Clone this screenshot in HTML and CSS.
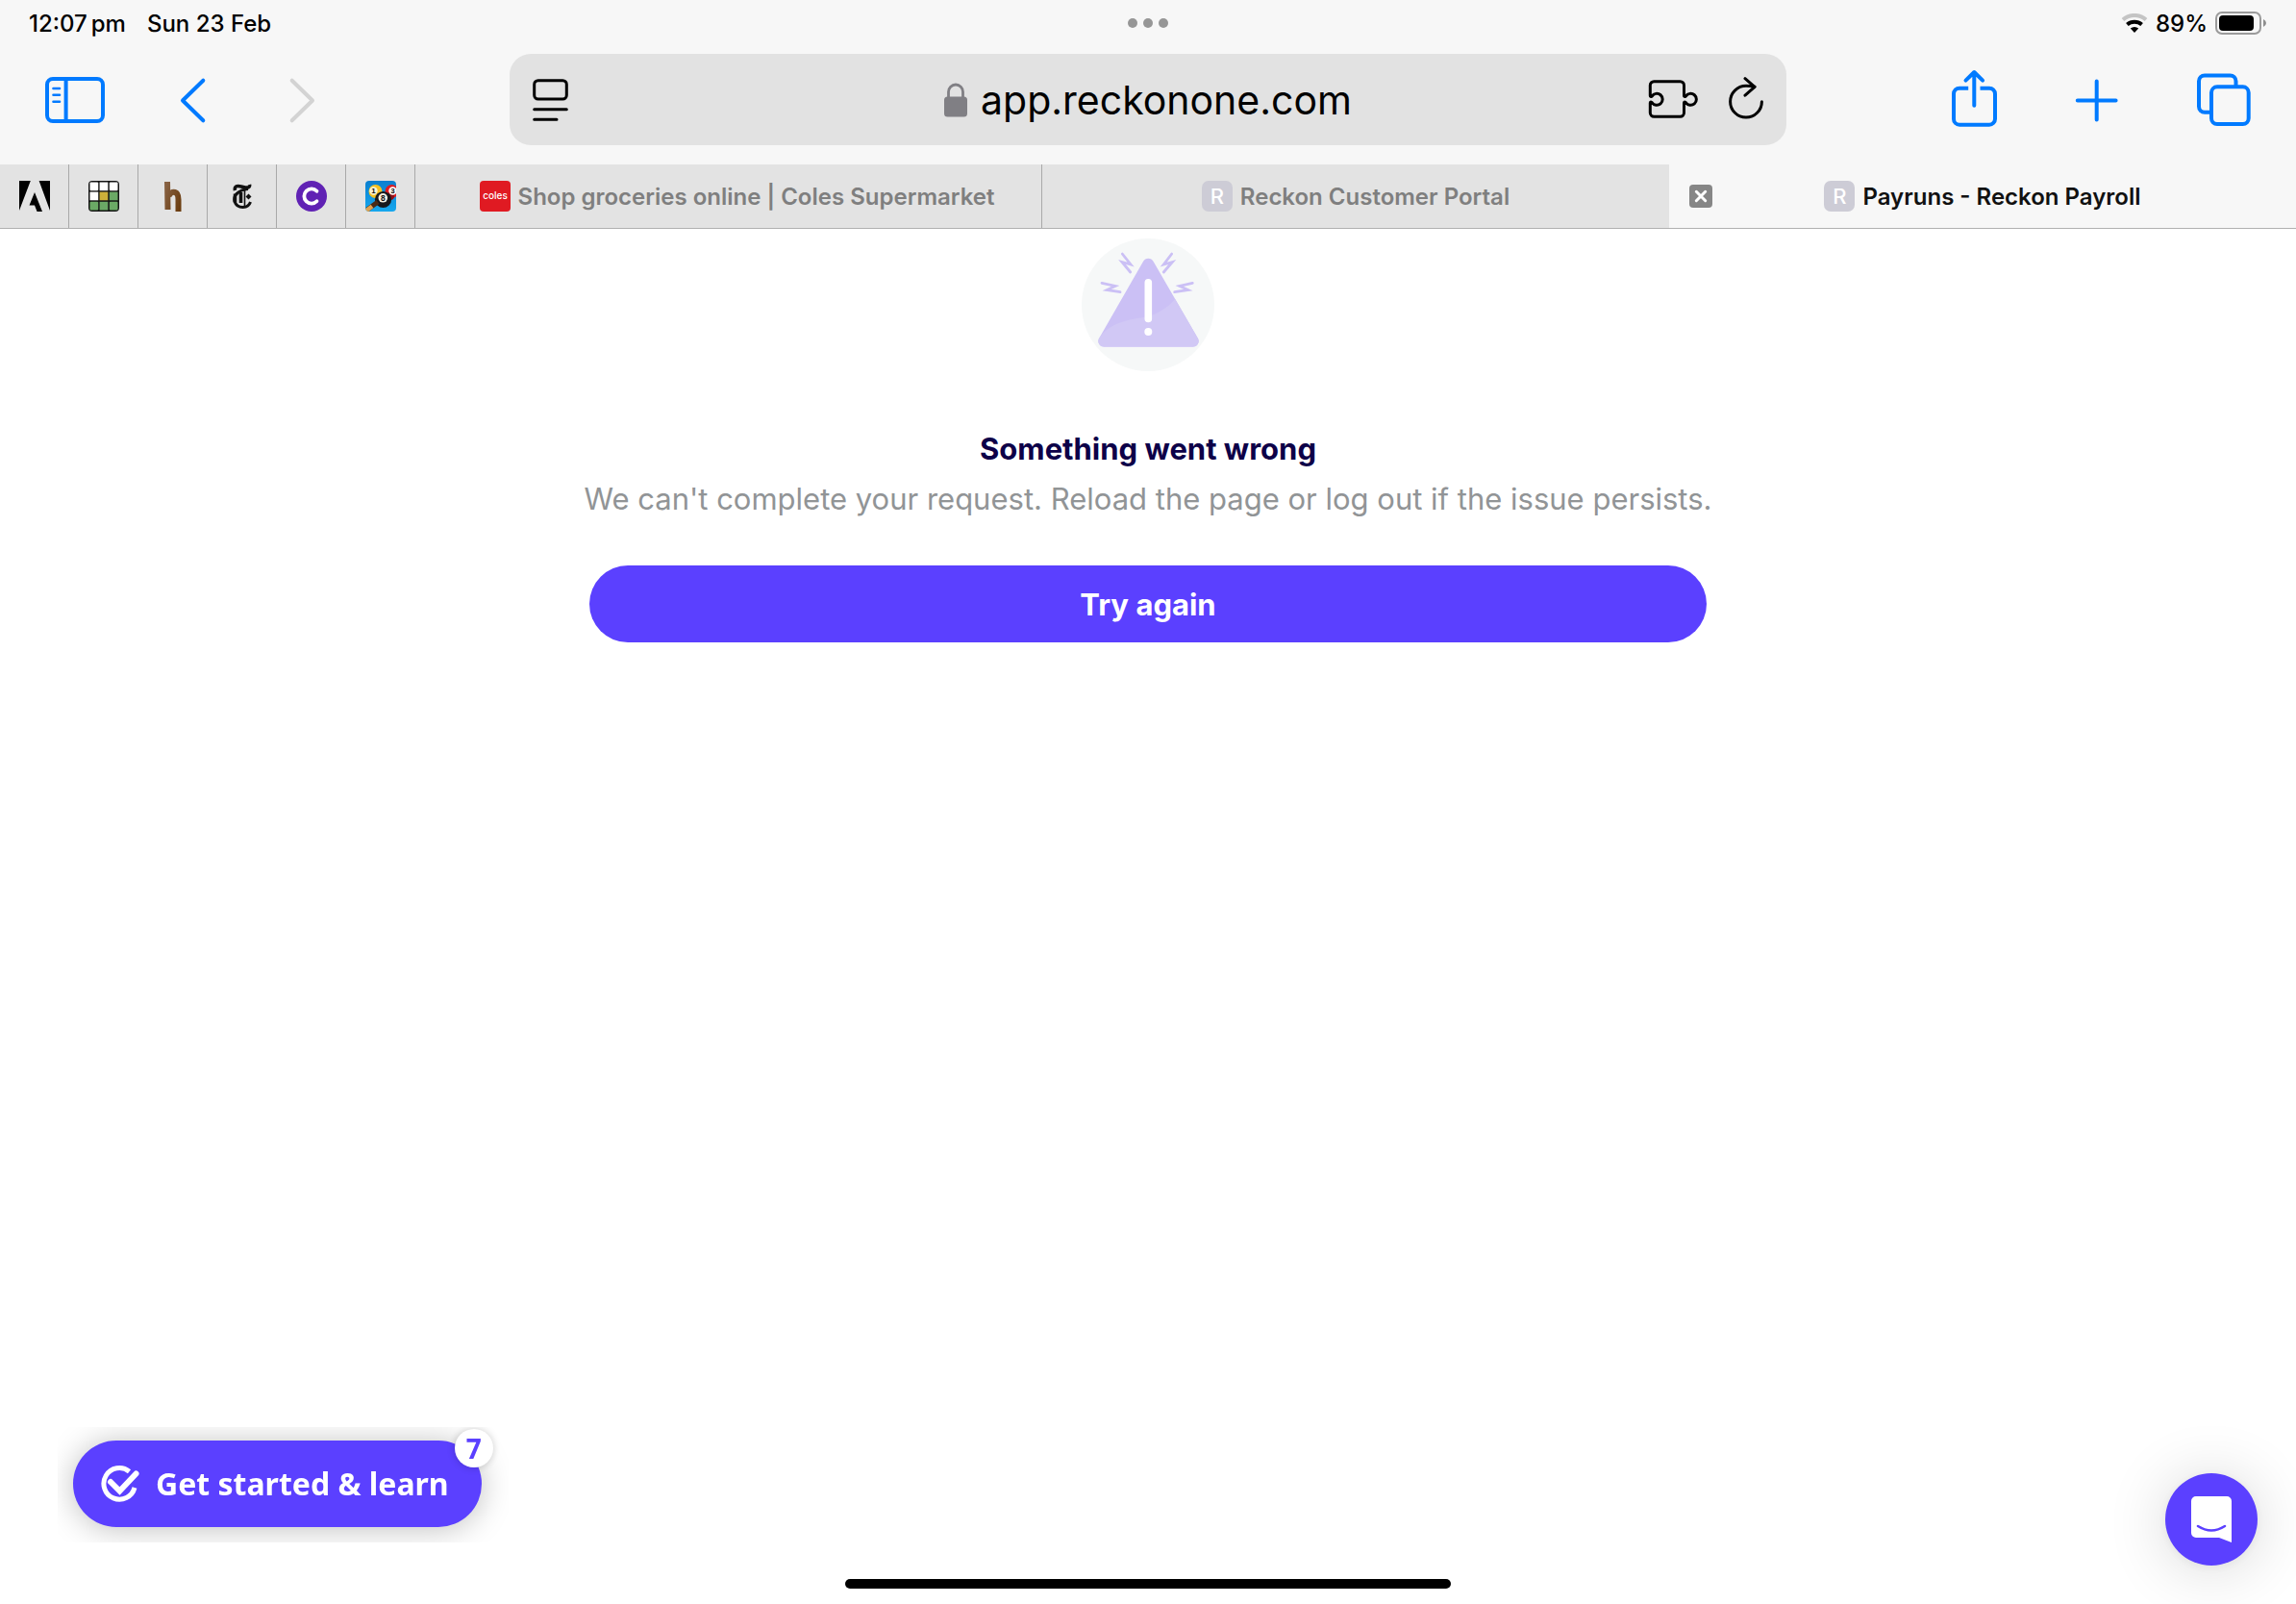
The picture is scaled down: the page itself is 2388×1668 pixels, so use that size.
FILE: index.html
```html
<!DOCTYPE html>
<html lang="en-AU">
<head>
<meta charset="utf-8">
<meta name="viewport" content="width=device-width, initial-scale=1">
<title>Payruns - Reckon Payroll</title>
<link rel="stylesheet" href="styles.css">
</head>
<body>
<header class="browser">
  <div class="status">
    <div class="status-left"><span class="time">12:07<span class="meridiem">pm</span></span><span>Sun 23 Feb</span></div>
    <button class="multitask" aria-label="Multitasking"><i></i><i></i><i></i></button>
    <div class="status-right">
      <svg width="28" height="20" viewBox="0 0 28 20" fill="none" aria-label="Wi-Fi">
        <path d="M2 6.5a18 18 0 0 1 24 0" stroke="#c4c4c4" stroke-width="4"/>
        <path d="M6.4 11.6a11.6 11.6 0 0 1 15.200 0" stroke="#000" stroke-width="4"/>
        <path d="M14 20l-4.200-4.400a6.200 6.200 0 0 1 8.400 0z" fill="#000"/>
      </svg>
      <span class="percent">89%</span>
      <svg width="54" height="24" viewBox="0 0 54 24" aria-label="Battery">
        <rect x="1" y="1" width="46" height="22" rx="6" fill="none" stroke="#9b9b9b" stroke-width="2"/>
        <rect x="4" y="4" width="36" height="16" rx="4"/>
        <path d="M50 8q3 1.500 3 4t-3 4z" fill="#8e8e8e"/>
      </svg>
    </div>
  </div>

  <div class="toolbar">
    <div class="tools tools-left">
      <button class="tool" aria-label="Show sidebar"><svg viewBox="0 0 64 64"><rect x="3" y="10" width="58" height="44" rx="6"/><path d="M22.600 10v44"/><path d="M9.500 20h6.500M9.500 26.700h6.500M9.500 33.700h6.500" stroke-width="2.600"/></svg></button>
      <button class="tool" aria-label="Back"><svg viewBox="0 0 64 64"><path d="M45.300 11.700L24 32.500l21.300 20.800"/></svg></button>
      <button class="tool tool-off" aria-label="Forward" disabled><svg viewBox="0 0 64 64"><path d="M17.700 11.700L39 32.500 17.700 53.300"/></svg></button>
    </div>
    <div class="address">
      <button class="mini" aria-label="Page menu"><svg width="40" height="48" viewBox="0 0 40 48"><rect x="3.700" y="3.700" width="33.600" height="19.300" rx="4"/><path d="M3.700 33.700h33.600M3.700 44.300h23.300"/></svg></button>
      <label class="url">
        <svg width="24" height="36" viewBox="0 0 24 36" aria-label="Secure"><path d="M4.500 16V9.500a7.500 7.500 0 0 1 15 0V16" fill="none" stroke="#807f84" stroke-width="2.800"/><rect y="14.500" width="24" height="21" rx="3.500" fill="#807f84"/></svg>
        <input class="url-input" type="text" value="app.reckonone.com" size="17" aria-label="Address">
      </label>
      <div class="address-end">
        <button class="mini" aria-label="Extensions"><svg width="52" height="48" viewBox="0 0 52 48"><path d="M6.300 4.700h27.200a4 4 0 0 1 4 4v10.800q0 1.600 1.800.600a6 6 0 1 1 0 6.400q-1.800-1-1.800.600v10.200a4 4 0 0 1-4 4H6.300a4 4 0 0 1-4-4V27.100q0-1.600 1.800-.600a6 6 0 1 0 0-6.400q-1.800 1-1.800-.600V8.700a4 4 0 0 1 4-4z"/></svg></button>
        <button class="mini" aria-label="Reload"><svg width="40" height="48" viewBox="0 0 40 48"><path d="M36.400 25.700A16.400 16.400 0 1 1 20 9.300q5 0 9 .9"/><path d="M19 1.700l10 8.600-10 8.900"/></svg></button>
      </div>
    </div>
    <div class="tools tools-right">
      <button class="tool" aria-label="Share"><svg viewBox="0 0 64 64"><path stroke-linecap="butt" d="M22.200 19.700H13a6 6 0 0 0-6 6v26a6 6 0 0 0 6 6h31a6 6 0 0 0 6-6v-26a6 6 0 0 0-6-6h-9.500"/><path d="M28.300 3.500v34.300M19.500 11.700l8.800-8.700 8.800 8.700"/></svg></button>
      <button class="tool" aria-label="New tab"><svg viewBox="0 0 64 64"><path d="M7.800 32.500h39.800M27.700 12.600v39.800"/></svg></button>
      <button class="tool" aria-label="Show all tabs"><svg viewBox="0 0 64 64"><path stroke-linecap="butt" d="M44.500 18v-5.500a6 6 0 0 0-6-6H12a6 6 0 0 0-6 6v26.300a6 6 0 0 0 6 6h7"/><rect x="19" y="18.300" width="38.700" height="38.700" rx="6"/></svg></button>
    </div>
  </div>

  <nav class="tabs" aria-label="Open tabs">
    <a class="pin" href="#" aria-label="Adobe"><svg class="fav" viewBox="0 0 32 32"><path d="M0 0h11.800L0 31zM20.600 0H32v31zM16 12l8 20h-5.500l-2.500-6.500h-5.500z"/></svg></a>
    <a class="pin" href="#" aria-label="Word puzzle"><svg class="fav" viewBox="0 0 32 32"><rect width="32" height="32" rx="4" fill="#141414"/><g fill="#fff"><rect x="1.500" y="1.500" width="8.700" height="8.700" rx="1"/><rect x="11.600" y="1.500" width="8.700" height="8.700"/><rect x="21.800" y="1.500" width="8.700" height="8.700" rx="1"/><rect x="1.500" y="11.600" width="8.700" height="8.700"/></g><rect x="11.600" y="11.600" width="8.700" height="8.700" fill="#cdb13a"/><g fill="#6ba965"><rect x="21.800" y="11.600" width="8.700" height="8.700"/><rect x="1.500" y="21.800" width="8.700" height="8.700" rx="1"/><rect x="11.600" y="21.800" width="8.700" height="8.700"/><rect x="21.800" y="21.800" width="8.700" height="8.700" rx="1"/></g></svg></a>
    <a class="pin" href="#" aria-label="Brown favicon"><svg class="fav" viewBox="0 0 32 32"><defs><linearGradient id="wood" x2="1" y2="1"><stop offset="0" stop-color="#876142"/><stop offset="1" stop-color="#6b3d10"/></linearGradient></defs><path d="M10 1L10.500 30M11.500 15.500q3-4.500 6.500-3.500t3.500 7.500V32" fill="none" stroke="url(#wood)" stroke-width="6"/></svg></a>
    <a class="pin" href="#" aria-label="The New York Times"><svg class="fav" viewBox="0 0 32 32" fill="none" stroke="#111"><path d="M8.500 10q-1-4.500 3-4.500c4 0 7 2.500 11 1.200q1.500-.7 1-2.700" stroke-width="3.600"/><path d="M22 8.500q-6 .5-10 3.500-5.500 4-4 9.500 2 6 8.500 6 6 0 8-5.500" stroke-width="3"/><path d="M8.500 13.500v9" stroke-width="3.500"/><path d="M14.500 12v11" stroke-width="3.600"/><path d="M18.500 10v17" stroke-width="1.600"/><path d="M22.500 13.500l3 3-3 3-3-3z" fill="#111" stroke="none"/></svg></a>
    <a class="pin" href="#" aria-label="Purple favicon"><svg class="fav" viewBox="0 0 32 32"><circle cx="16" cy="16" r="16" fill="#6022b4"/><path d="M21.500 10.800a7.600 7.600 0 1 0 0 10.400" fill="none" stroke="#fff" stroke-width="3.800" stroke-linecap="round"/></svg></a>
    <a class="pin" href="#" aria-label="8 Ball Pool"><svg class="fav" viewBox="0 0 32 32"><defs><clipPath id="pool"><rect width="32" height="32" rx="4"/></clipPath><linearGradient id="felt" x2="0" y2="1"><stop offset="0" stop-color="#0a7fd0"/><stop offset="1" stop-color="#17a8ee"/></linearGradient></defs><g clip-path="url(#pool)" font-family="Liberation Sans, sans-serif" font-weight="700" text-anchor="middle" fill="#111"><rect width="32" height="32" fill="url(#felt)"/><circle cx="10.500" cy="11" r="7" fill="#f5c120"/><circle cx="27.500" cy="11" r="7" fill="#dc1c22"/><circle cx="26" cy="16" r="4" fill="#8d1018"/><circle cx="8.500" cy="10.500" r="4.200" fill="#fbf3d5"/><circle cx="28.500" cy="10.500" r="4.200" fill="#fff"/><text x="8.500" y="13.300" font-size="8">1</text><text x="28.500" y="13.300" font-size="8">3</text><circle cx="18.500" cy="19.500" r="8.600" fill="#17181c"/><circle cx="18.300" cy="17.800" r="4.800" fill="#f4f0e2"/><text x="18.300" y="20.900" font-size="8.500">8</text><path d="M2 30L13 22" stroke="#4a2a16" stroke-width="5"/><path d="M1 31l6-4.500" stroke="#e0a352" stroke-width="4.500"/></g></svg></a>
    <a class="tab tab-long" href="#"><span class="tab-label"><svg class="fav" viewBox="0 0 32 32"><rect width="32" height="32" rx="4" fill="#e01a22"/><text x="16" y="19" font-family="Inter, sans-serif" font-weight="500" font-size="10" fill="#fff" text-anchor="middle">coles</text></svg>Shop groceries online | Coles Supermarket</span></a>
    <a class="tab" href="#"><span class="tab-label"><span class="fav letter">R</span>Reckon Customer Portal</span></a>
    <div class="tab tab-active"><button class="close" aria-label="Close tab"><svg width="24" height="24" viewBox="0 0 24 24"><path d="M7.300 7.300l9.400 9.400M16.700 7.300l-9.400 9.400"/></svg></button><a class="tab-label" href="#" aria-current="page"><span class="fav letter">R</span>Payruns - Reckon Payroll</a></div>
  </nav>
</header>

<main class="page">
  <section class="error">
    <svg class="art" width="138" height="138" viewBox="0 0 138 138" aria-hidden="true">
      <defs><clipPath id="tri"><path d="M64.100 23.700L18.300 103.500a6 6 0 0 0 5.200 9.200h92a6 6 0 0 0 5.200-9.200L74.500 23.700a6 6 0 0 0-10.400 0z"/></clipPath></defs>
      <circle cx="69" cy="69" r="69" fill="#f6f8f8"/>
      <g clip-path="url(#tri)"><path fill="#cbc0f5" d="M0 0h138v138H0z"/><path fill="#d1c8f5" d="M20 101C33 86 52 84 64 82s24-8 34-20l30 50H10z"/></g>
      <path d="M69.300 45.700v37.700" stroke="#fff" stroke-width="7.600" stroke-linecap="round"/><circle cx="69.300" cy="97" r="4" fill="#fff"/>
      <path d="M42.300 16l8.700 11-9-2.500L50.700 35M93.700 16l-8.400 11 9-2.500L85.300 35M21 46.300l14 3.200-8.700 4L40 55.700M115.300 46.300l-13.500 3.200 8.900 4-14 2.200" fill="none" stroke="#cbc0f5" stroke-width="2.800" stroke-linecap="round"/>
    </svg>
    <h1 class="error-title">Something went wrong</h1>
    <p class="error-text">We can't complete your request. Reload the page or log out if the issue persists.</p>
    <button class="retry">Try again</button>
  </section>
</main>

<aside class="launcher">
  <button class="learn"><svg width="42" height="40" viewBox="0 0 42 40" fill="none" stroke="#fff"><path d="M30.500 7.200A16.300 16.300 0 1 0 36 24" stroke-width="5"/><path d="M11 18l9.500 9.500L37.500 9.500" stroke-width="6" stroke-linecap="round"/></svg>Get started &amp; learn</button>
  <span class="badge">7</span>
</aside>
<button class="chat" aria-label="Open chat"><svg width="42" height="48" viewBox="0 0 42 48"><path d="M5 0h32a5 5 0 0 1 5 5v43l-13-5H5a5 5 0 0 1-5-5V5a5 5 0 0 1 5-5z" fill="#fff"/><path d="M7 31q14 9 28 0" fill="none" stroke="#5b40ff" stroke-width="2.600" stroke-linecap="round"/></svg></button>
<div class="home"></div>
</body>
</html>
```
FILE: styles.css
```css
* { box-sizing: border-box; }
body { margin: 0; min-height: 100vh; background: #fff; color: #000; font-family: Inter, "Liberation Sans", sans-serif; }
button { padding: 0; border: 0; background: none; color: inherit; font: inherit; cursor: pointer; }
a { color: inherit; text-decoration: none; }
svg { display: block; flex: none; }

.browser { background: #f7f7f7; border-bottom: 1px solid #b0b0b0; }

.status { display: grid; grid-template-columns: 1fr auto 1fr; align-items: center; height: 48px; padding: 0 30px; font-size: 24px; font-weight: 500; }
.status-left { display: flex; gap: 22px; }
.time { display: flex; gap: 4px; }
.multitask { display: flex; gap: 6px; }
.multitask i { width: 10px; height: 10px; border-radius: 50%; background: #969696; }
.status-right { display: flex; justify-content: flex-end; align-items: center; gap: 8px; }

.toolbar { display: grid; grid-template-columns: 1fr minmax(0, 1328px) 1fr; align-items: center; padding: 8px 0 20px; }
.tools { display: flex; }
.tools-left { gap: 56px; padding-left: 46px; }
.tools-right { justify-content: flex-end; gap: 64px; padding-right: 43px; }
.tool { color: #007aff; }
.tool-off { color: #d3d3d3; }
.tool svg { width: 64px; height: 64px; }
.tool svg, .mini svg { fill: none; stroke: currentColor; stroke-width: 4; stroke-linecap: round; stroke-linejoin: round; }
.mini svg { stroke-width: 3; }

.address { display: grid; grid-template-columns: 1fr auto 1fr; align-items: center; height: 95px; padding: 0 22px; border-radius: 22px; background: #e2e2e2; }
.address .mini { justify-self: start; }
.url { display: flex; align-items: center; gap: 14px; }
.url-input { field-sizing: content; padding: 0; border: 0; outline: 0; background: none; color: #000; font: 400 41px/52px Inter, "Liberation Sans", sans-serif; }
.address-end { display: flex; justify-content: flex-end; gap: 30px; }

.tabs { display: grid; grid-template-columns: repeat(6, 72px) repeat(3, minmax(0, 1fr)); height: 66px; background: #e3e3e3; color: #7f7f7f; font-size: 24px; font-weight: 600; }
.pin { display: flex; align-items: center; justify-content: center; border-right: 1px solid #a9a9a9; }
.fav { flex: none; width: 32px; height: 32px; }
.tab { display: grid; grid-template-columns: 1fr auto 1fr; align-items: center; min-width: 0; border-right: 1px solid #a9a9a9; }
.tab-label { display: flex; grid-column: 2; align-items: center; gap: 8px; white-space: nowrap; }
.tab-long { padding-left: 18px; }
.tab:nth-last-child(2) { border-right: 0; }
.tab-active { border-right: 0; background: #f7f7f7; color: #111; }
.letter { display: flex; align-items: center; justify-content: center; border-radius: 7px; background: #cdccd6; color: #fff; font-size: 22px; font-weight: 500; }
.close { justify-self: start; margin-left: 21px; border-radius: 4px; background: #868686; }
.close svg { fill: none; stroke: #fff; stroke-width: 3; stroke-linecap: round; }

.page { display: flex; justify-content: center; padding: 10px 24px 200px; }
.error { display: flex; flex-direction: column; text-align: center; }
.art { align-self: center; margin-bottom: 55px; }
.error-title, .error-text { margin: 0; font-size: 31px; line-height: 52px; }
.error-title { color: #0d0048; font-weight: 700; }
.error-text { color: #919496; }
.retry { height: 80px; margin: 43px 6px 0; border-radius: 40px; background: #5b40ff; color: #fff; font-size: 31px; font-weight: 700; }

.launcher { position: fixed; bottom: 64px; left: 60px; overflow: hidden; padding: 14px 28px 16px 16px; }
.learn { display: flex; align-items: center; gap: 16px; height: 90px; padding: 0 34px 0 28px; border-radius: 45px; background: #5b40ff; box-shadow: 0 2px 32px rgba(0, 0, 0, .25); color: #fff; font: 700 32px/44px "Noto Sans", "Open Sans", sans-serif; }
.badge { position: absolute; top: 2px; right: 16px; width: 40px; height: 40px; border-radius: 50%; background: #fff; box-shadow: 0 0 8px rgba(0, 0, 0, .2); color: #5b40ff; font: 700 28px/40px "Noto Sans", "Open Sans", sans-serif; text-align: center; }
.chat { position: fixed; right: 40px; bottom: 40px; display: flex; align-items: center; justify-content: center; width: 96px; height: 96px; border-radius: 50%; background: #5b40ff; box-shadow: 0 2px 12px rgba(0, 0, 0, .06), 0 4px 64px rgba(0, 0, 0, .16); }
.home { position: fixed; bottom: 16px; left: 50%; width: 630px; height: 10px; margin-left: -315px; border-radius: 5px; background: #000; }
```
